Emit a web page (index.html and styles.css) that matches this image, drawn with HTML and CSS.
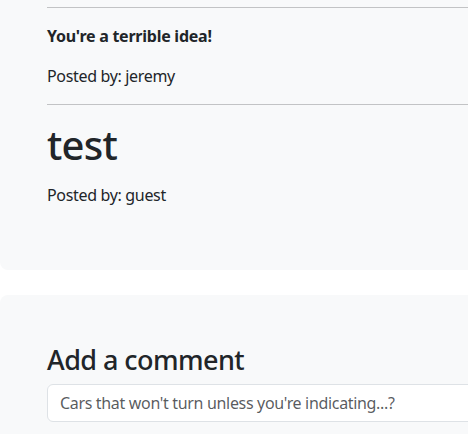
FILE: index.html
```html
<!DOCTYPE html>
<html lang="en">
<head>
<meta charset="utf-8">
<title>Comments</title>
<link rel="stylesheet" href="styles.css">
</head>
<body>
<main class="page">
  <section class="card card-comments">
    <hr class="divider">
    <p class="comment-text">You're a terrible idea!</p>
    <p class="meta">Posted by: jeremy</p>
    <hr class="divider">
    <h1 class="comment-title">test</h1>
    <p class="meta">Posted by: guest</p>
  </section>
  <section class="card card-form">
    <h2 class="form-title">Add a comment</h2>
    <input class="form-control" type="text" placeholder="Cars that won't turn unless you're indicating...?">
  </section>
</main>
</body>
</html>
```

FILE: styles.css
```css
html, body {
  margin: 0;
  padding: 0;
  overflow: hidden;
  background: #ffffff;
}

body {
  font-family: "Noto Sans", "Open Sans", sans-serif;
  font-size: 16px;
  line-height: 1.5;
  letter-spacing: -0.33px;
  color: #212529;
}

.page {
  display: flex;
  flex-direction: column;
  gap: 25px;
  width: 540px;
  margin-top: -41px;
}

.card {
  background: #f8f9fa;
  border-radius: 8px;
  padding: 48px 48px 48px 47px;
}

.card-comments {
  padding-bottom: 47px;
}

.divider {
  margin: 0 0 16px;
  border: 0;
  border-top: 1px solid #212529;
  opacity: 0.25;
}

.comment-text {
  margin: 0 0 16px;
  font-weight: 700;
  letter-spacing: -0.25px;
}

.meta {
  margin: 0 0 16px;
}

.comment-title {
  margin: 0 0 14px;
  font-size: 40px;
  font-weight: 500;
  line-height: 1.2;
  letter-spacing: -0.75px;
}

.form-title {
  margin: 0 0 7px;
  font-size: 27px;
  font-weight: 500;
  line-height: 1.25;
  letter-spacing: -0.55px;
}

.form-control {
  display: block;
  box-sizing: border-box;
  width: 100%;
  height: 38px;
  padding: 6px 12px;
  font-family: inherit;
  font-size: 16px;
  line-height: 1.5;
  letter-spacing: -0.33px;
  color: #212529;
  background: #ffffff;
  border: 1px solid #dee2e6;
  border-radius: 6px;
}

.form-control::placeholder {
  color: rgba(33, 37, 41, 0.75);
}
```
